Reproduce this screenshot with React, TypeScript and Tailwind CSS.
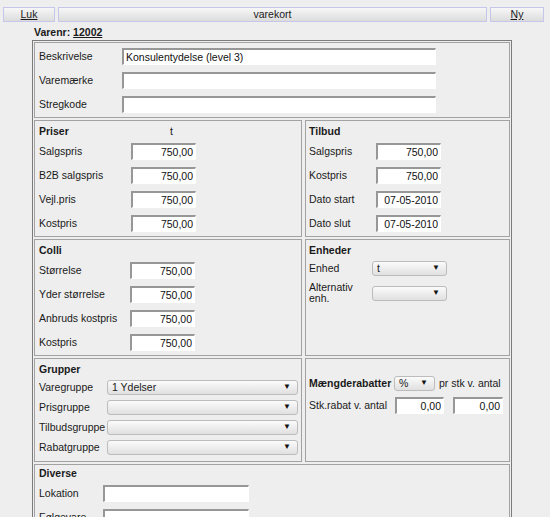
import type { ReactNode } from 'react'

const font = "font-['Liberation_Sans',Arial,Helvetica,sans-serif]"

function Field({ value = '', className = '' }: { value?: string; className?: string }) {
  return (
    <input
      readOnly
      value={value}
      className={`h-[17px] shrink-0 bg-white border-t-2 border-l-2 border-r border-b border-t-[#979797] border-l-[#979797] border-r-white border-b-white px-[2px] text-[10.5px] text-[#111] outline-none ${font} ${className}`}
    />
  )
}

function Drop({ value = '', className = '' }: { value?: string; className?: string }) {
  return (
    <div
      className={`flex h-[15px] shrink-0 items-center justify-between rounded-[3px] border border-[#bcbcbc] bg-linear-to-b from-[#fbfbfb] to-[#e0e0e0] pl-[4px] pr-[6px] ${className}`}
    >
      <span>{value}</span>
      <span className="text-[8px] leading-none text-[#111]">▼</span>
    </div>
  )
}

function Cell({ className = '', children }: { className?: string; children?: ReactNode }) {
  return <div className={`border border-[#a2a2a2] ${className}`}>{children}</div>
}

function Row({ label, labelWidth, children, className = 'h-[24px]' }: { label: string; labelWidth: string; children?: ReactNode; className?: string }) {
  return (
    <div className={`flex items-center ${className}`}>
      <span className={`shrink-0 whitespace-nowrap ${labelWidth}`}>{label}</span>
      {children}
    </div>
  )
}

function Header({ children }: { children: ReactNode }) {
  return <div className="flex h-[16px] items-center font-bold">{children}</div>
}

export default function App() {
  const priser = ['Salgspris', 'B2B salgspris', 'Vejl.pris', 'Kostpris']
  const tilbud = [
    ['Salgspris', '750,00'],
    ['Kostpris', '750,00'],
    ['Dato start', '07-05-2010'],
    ['Dato slut', '07-05-2010'],
  ]
  const colli = ['Størrelse', 'Yder størrelse', 'Anbruds kostpris', 'Kostpris']
  const grupper = [
    ['Varegruppe', '1 Ydelser'],
    ['Prisgruppe', ''],
    ['Tilbudsgruppe', ''],
    ['Rabatgruppe', ''],
  ]

  return (
    <div className={`min-h-[517px] bg-[#eeeeee] text-[10.5px] leading-[13px] text-[#1a1a1a] ${font}`}>
      {/* knapperne i toppen */}
      <div className="flex gap-[3px] pl-[3px] pt-[7px]">
        <button className="h-[15px] w-[52px] border border-[#c6c6ea] bg-linear-to-b from-[#f7f7f7] to-[#dcdcdc] leading-[13px]">
          <span className="underline">Luk</span>
        </button>
        <button className="h-[15px] w-[429px] border border-[#c6c6ea] bg-linear-to-b from-[#f7f7f7] to-[#dcdcdc] leading-[13px]">
          varekort
        </button>
        <button className="h-[15px] w-[54px] border border-[#c6c6ea] bg-linear-to-b from-[#f7f7f7] to-[#dcdcdc] leading-[13px]">
          <span className="underline">Ny</span>
        </button>
      </div>

      <div className="flex h-[18px] items-end pb-[1px] pl-[34px] font-bold">
        Varenr:&nbsp;<span className="underline">12002</span>
      </div>

      <div className="ml-[32px] flex w-[480px] flex-col gap-[2px] border border-[#7c7c7c] p-px">
        <Cell className="h-[76px] pl-[4px] pt-px">
          <Row label="Beskrivelse" labelWidth="w-[83px]">
            <Field value="Konsulentydelse (level 3)" className="w-[314px]" />
          </Row>
          <Row label="Varemærke" labelWidth="w-[83px]">
            <Field className="w-[314px]" />
          </Row>
          <Row label="Stregkode" labelWidth="w-[83px]">
            <Field className="w-[314px]" />
          </Row>
        </Cell>

        <div className="flex gap-[3px]">
          <Cell className="h-[117px] w-[268px] pl-[4px] pt-[2px]">
            <Header>
              <span className="w-[92px]">Priser</span>
              <span className="pl-[39px] font-normal">t</span>
            </Header>
            {priser.map((p) => (
              <Row key={p} label={p} labelWidth="w-[92px]">
                <Field value="750,00" className="w-[65px] text-right" />
              </Row>
            ))}
          </Cell>
          <Cell className="h-[117px] w-[205px] pl-[3px] pt-[2px]">
            <Header>Tilbud</Header>
            {tilbud.map(([l, v]) => (
              <Row key={l} label={l} labelWidth="w-[67px]">
                <Field value={v} className="w-[65px] text-right" />
              </Row>
            ))}
          </Cell>
        </div>

        <div className="flex gap-[3px]">
          <Cell className="h-[117px] w-[268px] pl-[4px] pt-[2px]">
            <Header>Colli</Header>
            {colli.map((c) => (
              <Row key={c} label={c} labelWidth="w-[91px]">
                <Field value="750,00" className="w-[65px] text-right" />
              </Row>
            ))}
          </Cell>
          <Cell className="h-[117px] w-[205px] pl-[3px] pt-[2px]">
            <Header>Enheder</Header>
            <Row label="Enhed" labelWidth="w-[63px]" className="h-[20px]">
              <Drop value="t" className="w-[75px]" />
            </Row>
            <div className="flex h-[30px] items-center">
              <span className="w-[63px] shrink-0 leading-[11px]">Alternativ enh.</span>
              <Drop className="w-[75px]" />
            </div>
          </Cell>
        </div>

        <div className="flex gap-[3px]">
          <Cell className="h-[104px] w-[268px] pl-[4px] pt-[2px]">
            <Header>Grupper</Header>
            {grupper.map(([l, v]) => (
              <Row key={l} label={l} labelWidth="w-[68px]" className="h-[20px]">
                <Drop value={v} className="w-[191px]" />
              </Row>
            ))}
          </Cell>
          <Cell className="h-[104px] w-[205px] pl-[3px] pt-[13px]">
            <div className="flex h-[22px] items-center">
              <span className="w-[85px] shrink-0 font-bold">Mængderabatter</span>
              <Drop value="%" className="h-[13px] w-[41px]" />
              <span className="ml-[4px] whitespace-nowrap">pr stk v. antal</span>
            </div>
            <div className="flex h-[22px] items-center">
              <span className="w-[86px] shrink-0 whitespace-nowrap">Stk.rabat v. antal</span>
              <Field value="0,00" className="h-[16px] w-[49px] text-right" />
              <Field value="0,00" className="ml-[9px] h-[16px] w-[50px] text-right" />
            </div>
          </Cell>
        </div>

        <Cell className="pb-[6px] pl-[4px]">
          <Header>Diverse</Header>
          <Row label="Lokation" labelWidth="w-[64px]">
            <Field className="w-[146px]" />
          </Row>
          <Row label="Følgevare" labelWidth="w-[64px]">
            <Field className="w-[146px]" />
          </Row>
        </Cell>
      </div>
    </div>
  )
}
